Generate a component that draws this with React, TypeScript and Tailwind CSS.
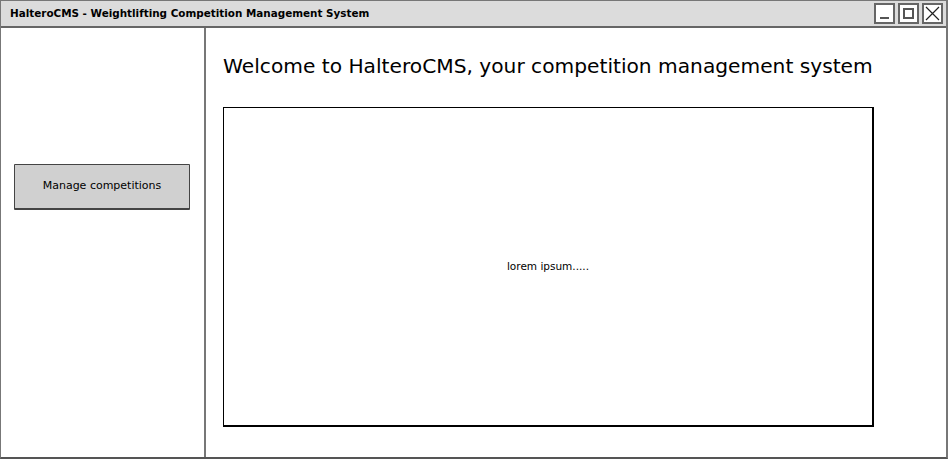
export default function App() {
  return (
    <div className="w-[949px] h-[465px] bg-white font-['DejaVu_Sans',sans-serif] text-black">
      <div className="w-[948px] h-[459px] flex flex-col border border-[#777] border-b-2 border-r-2 border-b-[#555]">
        {/* Title bar */}
        <div className="h-[27px] shrink-0 flex items-center justify-between bg-[#dcdcdc] border-b-2 border-[#666] pl-[9px] pr-[3px]">
          <span className="text-[10.4px] font-bold">
            HalteroCMS - Weightlifting Competition Management System
          </span>
          <div className="flex gap-[3px]">
            <div className="w-[21px] h-[21px] border-2 border-[#666] bg-white flex items-end justify-center pb-[3px]">
              <div className="w-[9px] h-[2px] bg-[#555]" />
            </div>
            <div className="w-[21px] h-[21px] border-2 border-[#666] bg-white flex items-center justify-center">
              <div className="w-[11px] h-[11px] border-2 border-[#555]" />
            </div>
            <div className="w-[21px] h-[21px] border-2 border-[#666] bg-white flex items-center justify-center">
              <svg width="15" height="15" viewBox="0 0 15 15">
                <path d="M1 1L14 14M14 1L1 14" stroke="#222" strokeWidth="1.2" />
              </svg>
            </div>
          </div>
        </div>

        <div className="flex flex-1">
          {/* Sidebar */}
          <div className="w-[205px] shrink-0 border-r-2 border-[#777] pt-[136px] pl-[13px]">
            <div className="w-[176px] h-[46px] bg-[#d0d0d0] border border-[#444] border-b-2 rounded-[1px] flex items-center justify-center text-[11px]">
              Manage competitions
            </div>
          </div>

          {/* Main */}
          <div className="flex-1 pl-[17px] pt-[22px]">
            <h1 className="text-[20.2px] leading-[32px] whitespace-nowrap">
              Welcome to HalteroCMS, your competition management system
            </h1>
            <div className="mt-[25px] w-[651px] h-[320px] border border-black border-r-2 border-b-2 flex items-center justify-center text-[10.5px]">
              lorem ipsum.....
            </div>
          </div>
        </div>
      </div>
    </div>
  );
}
